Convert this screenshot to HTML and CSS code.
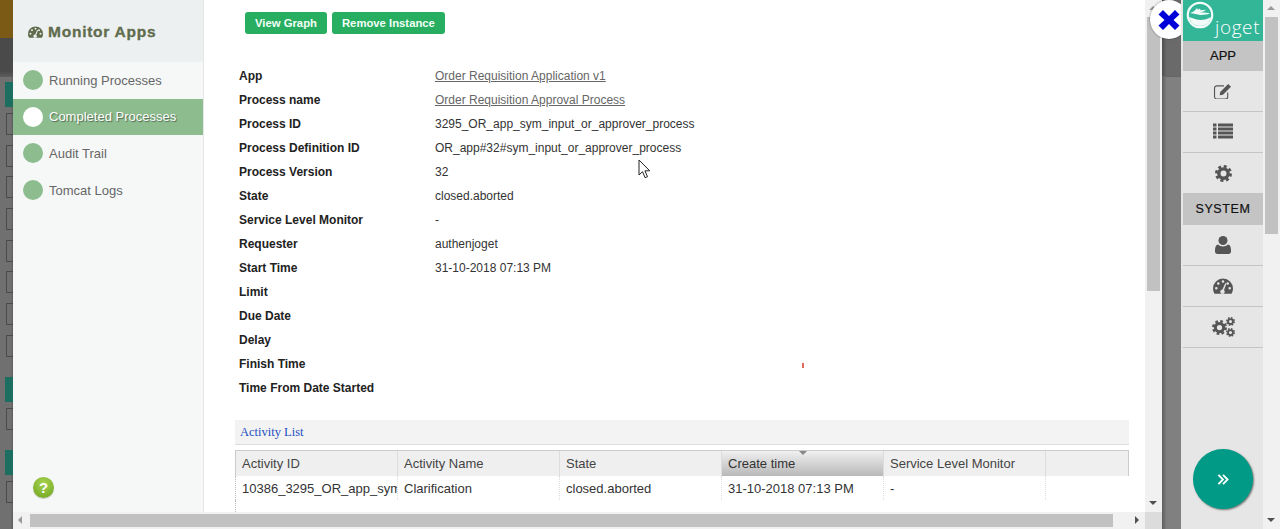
FILE: index.html
```html
<!DOCTYPE html>
<html lang="en">
<head>
    <meta charset="UTF-8">
    <title>Monitor Apps</title>
    <link rel="stylesheet" href="styles.css">
</head>
<body>
    <svg class="defs" width="0" height="0">
        <symbol id="i-gauge" viewBox="0 0 20 16">
            <path fill-rule="evenodd" d="M10 0.5a10 10 0 0 1 10 10c0 1.8-.5 3.4-1.3 4.9-.2.3-.5.4-.8.4H2.100c-.3 0-.6-.1-.8-.4A10 10 0 0 1 0 10.500a10 10 0 0 1 10-10zM10 2.200a1.300 1.300 0 1 0 0 2.600 1.300 1.300 0 0 0 0-2.600zM5.300 4.200a1.300 1.300 0 1 0 0 2.600 1.300 1.300 0 0 0 0-2.600zM3.300 9a1.300 1.300 0 1 0 0 2.600 1.300 1.300 0 0 0 0-2.600zM16.700 9a1.300 1.300 0 1 0 0 2.600 1.300 1.300 0 0 0 0-2.600zM14.700 4.200a1.300 1.300 0 1 0 0 2.600 1.300 1.300 0 0 0 0-2.600zM12.200 5.200l-2.700 6.300a2.200 2.200 0 1 0 1.500.6l2.400-6.400z"/>
        </symbol>
        <symbol id="i-gear" viewBox="0 0 20 20">
            <circle cx="10" cy="10" r="5.500" fill="none" stroke="currentColor" stroke-width="4"/>
            <circle cx="10" cy="10" r="8.300" fill="none" stroke="currentColor" stroke-width="3.400" stroke-dasharray="3.500 3.020"/>
        </symbol>
    </svg>

    <div class="screen">
        <div class="strip">
            <div class="strip-brown"></div>
            <div class="strip-dark"></div>
            <div class="teal first"></div>
            <div class="box"></div>
            <div class="box"></div>
            <div class="box"></div>
            <div class="box"></div>
            <div class="box"></div>
            <div class="box"></div>
            <div class="box"></div>
            <div class="box"></div>
            <div class="teal later"></div>
            <div class="box"></div>
            <div class="teal later"></div>
            <div class="box"></div>
        </div>

        <div class="modal">
            <div class="modal-body">
                <aside class="sidebar">
                    <h2 class="side-title">
                        <svg class="title-icon"><use href="#i-gauge"/></svg>
                        Monitor Apps
                    </h2>
                    <ul class="side-menu">
                        <li><span class="dot"></span>Running Processes</li>
                        <li class="active"><span class="dot"></span>Completed Processes</li>
                        <li><span class="dot"></span>Audit Trail</li>
                        <li><span class="dot"></span>Tomcat Logs</li>
                    </ul>
                    <div class="help">?</div>
                </aside>

                <main class="content">
                    <div class="actions">
                        <button>View Graph</button>
                        <button>Remove Instance</button>
                    </div>

                    <table class="details">
                        <tr><th>App</th><td><a href="#">Order Requisition Application v1</a></td></tr>
                        <tr><th>Process name</th><td><a href="#">Order Requisition Approval Process</a></td></tr>
                        <tr><th>Process ID</th><td>3295_OR_app_sym_input_or_approver_process</td></tr>
                        <tr><th>Process Definition ID</th><td>OR_app#32#sym_input_or_approver_process</td></tr>
                        <tr><th>Process Version</th><td>32</td></tr>
                        <tr><th>State</th><td>closed.aborted</td></tr>
                        <tr><th>Service Level Monitor</th><td>-</td></tr>
                        <tr><th>Requester</th><td>authenjoget</td></tr>
                        <tr><th>Start Time</th><td>31-10-2018 07:13 PM</td></tr>
                        <tr><th>Limit</th><td></td></tr>
                        <tr><th>Due Date</th><td></td></tr>
                        <tr><th>Delay</th><td></td></tr>
                        <tr><th>Finish Time</th><td></td></tr>
                        <tr><th>Time From Date Started</th><td></td></tr>
                    </table>

                    <div class="list-title">Activity List</div>

                    <table class="activities">
                        <thead>
                            <tr>
                                <th>Activity ID</th>
                                <th>Activity Name</th>
                                <th>State</th>
                                <th class="sorted">Create time</th>
                                <th>Service Level Monitor</th>
                                <th class="filler"></th>
                            </tr>
                        </thead>
                        <tbody>
                            <tr>
                                <td>10386_3295_OR_app_sym</td>
                                <td>Clarification</td>
                                <td>closed.aborted</td>
                                <td>31-10-2018 07:13 PM</td>
                                <td>-</td>
                                <td class="filler"></td>
                            </tr>
                        </tbody>
                    </table>
                    <div class="table-rest"></div>

                    <span class="red-tick"></span>
                    <svg class="cursor" width="14" height="20" viewBox="0 0 14 20">
                        <path d="M1 1v15l3.500-3.300 2.600 6 2.400-1-2.600-5.900h4.800z" fill="#fff" stroke="#222" stroke-width="1"/>
                    </svg>
                </main>

                <div class="vscroll">
                    <span class="arrow up"></span>
                    <div class="thumb"></div>
                    <span class="arrow down"></span>
                </div>
            </div>

            <div class="hscroll">
                <span class="arrow left"></span>
                <div class="hthumb"></div>
                <span class="arrow right"></span>
                <div class="corner"></div>
            </div>
        </div>

        <div class="gutter">
            <div class="gutter-top"></div>
        </div>

        <nav class="panel">
            <div class="logo">
                <svg class="logo-mark" width="28" height="28" viewBox="0 0 28 28">
                    <circle cx="14" cy="14" r="12.200" fill="none" stroke="#f2fbf8" stroke-width="2.200"/>
                    <path d="M4 12c3-.5 5-2.500 7-5l1 1.800 2-1.300.6 1.700 5.400-.4c-1.500 1.300-3.500 2.200-6 2.700 3.500-.2 7 0 10 1-3.500 1.200-7 1.600-10 1.400-3-.2-6-1.400-10-1.900z" fill="#f2fbf8"/>
                    <path d="M3 16c4 1 8 3 12 3 3 0 7-1 10-3-1 5-5 9-11 9-5.500 0-10-4-11-9z" fill="#f2fbf8"/>
                </svg>
                <span class="logo-text">joget</span>
            </div>
            <div class="panel-head">APP</div>
            <div class="panel-item">
                <svg width="20" height="16" viewBox="0 0 20 17" fill="none" stroke="#555">
                    <path d="M15 10v4.500a2.500 2.500 0 0 1-2.500 2.500h-9A2.500 2.500 0 0 1 1 14.500v-9A2.500 2.500 0 0 1 3.500 3H11" stroke-width="1.200"/>
                    <path d="M7 9.500L15.500 1l3 3-8.500 8.500-3.500.6z" fill="#555" stroke="none"/>
                </svg>
            </div>
            <div class="panel-item">
                <svg class="list-icon" width="20" height="16" viewBox="0 0 20 15" fill="#555">
                    <path d="M0 0h3.500v3H0zM5 0h15v3H5zM0 4h3.500v3H0zM5 4h15v3H5zM0 8h3.500v3H0zM5 8h15v3H5zM0 12h3.500v3H0zM5 12h15v3H5z"/>
                </svg>
            </div>
            <div class="panel-item no-line">
                <svg class="gear" width="17" height="17"><use href="#i-gear"/></svg>
            </div>
            <div class="panel-head system">SYSTEM</div>
            <div class="panel-item">
                <svg width="16" height="18" viewBox="0 0 16 18" fill="#555">
                    <circle cx="8" cy="4.500" r="4.500"/>
                    <path d="M3 8.500c1.300 1.300 3 2 5 2s3.700-.7 5-2c2 .3 3 2.500 3 5.500v1.500c0 1.400-1 2.500-2.500 2.500h-11C1 18 0 16.900 0 15.500V14c0-3 1-5.200 3-5.500z"/>
                </svg>
            </div>
            <div class="panel-item">
                <svg class="gauge" width="20" height="16"><use href="#i-gauge"/></svg>
            </div>
            <div class="panel-item">
                <span class="cogs">
                    <svg class="gear cog-big" width="15" height="15"><use href="#i-gear"/></svg>
                    <span class="cog-small">
                        <svg class="gear" width="9" height="9"><use href="#i-gear"/></svg>
                        <svg class="gear" width="9" height="9"><use href="#i-gear"/></svg>
                    </span>
                </span>
            </div>
            <div class="expand">
                <svg width="12" height="11" viewBox="0 0 13 12" fill="none" stroke="#fff" stroke-width="2">
                    <path d="M1.500 1l5 5-5 5M6.500 1l5 5-5 5"/>
                </svg>
            </div>
        </nav>

        <div class="page-scroll">
            <span class="arrow up"></span>
            <div class="thumb"></div>
            <span class="arrow down"></span>
        </div>

        <div class="close-btn">
            <svg width="24" height="24" viewBox="0 0 24 24">
                <path d="M6 2l6 6 6-6 4.500 4.500-6 5.500 6 5.500L18 22l-6-6-6 6-4.500-4.500 6-5.500-6-5.500z" fill="#0000d8"/>
            </svg>
        </div>
    </div>
</body>
</html>
```

FILE: styles.css
```css
* {
    box-sizing: border-box;
}
html, body {
    margin: 0;
    height: 529px;
    overflow: hidden;
}
body {
    font-family: "Liberation Sans", Arial, sans-serif;
    font-size: 12px;
    color: #333;
    background: #fff;
}
.defs {
    position: absolute;
}
.screen {
    position: relative;
    display: flex;
    width: 1280px;
    height: 529px;
}

/* dimmed page behind the dialog */
.strip {
    width: 13px;
    flex: none;
    background: linear-gradient(to right, #707070 85%, #5c5c5c);
    overflow: hidden;
}
.strip-brown {
    height: 38px;
    background: #7a5a14;
}
.strip-dark {
    height: 39px;
    background: linear-gradient(to bottom, #4a4a4a 85%, #5c5c5c);
}
.teal {
    width: 8px;
    height: 25px;
    margin-left: 5px;
    background: #1c6f60;
}
.teal.first {
    margin-top: 5px;
}
.teal.later {
    margin-top: 20px;
}
.box {
    width: 8px;
    height: 22px;
    margin: 9.700px 0 0 6px;
    border: 1px solid #4b4b4b;
    border-right: none;
}
.teal + .box {
    margin-top: 6px;
}

.modal {
    width: 1149px;
    flex: none;
    display: flex;
    flex-direction: column;
    background: #fff;
}
.modal-body {
    display: flex;
    height: 512px;
}

.sidebar {
    width: 191px;
    flex: none;
    display: flex;
    flex-direction: column;
    background: #f6f8f8;
    border-right: 1px solid #e6e6e6;
}
.side-title {
    height: 62px;
    margin: 0;
    padding: 23px 0 0 15px;
    font-size: 15.500px;
    font-weight: bold;
    letter-spacing: 0.75px;
    color: #5f6b4c;
    background: #ecf0f1;
    -webkit-text-stroke: 0.3px #5f6b4c;
}
.title-icon {
    width: 15px;
    height: 12px;
    fill: #5f6b4c;
    vertical-align: -1px;
}
.side-menu {
    list-style: none;
    margin: 0;
    padding: 0;
}
.side-menu li {
    display: flex;
    align-items: center;
    gap: 6px;
    height: 37px;
    padding: 0 0 1px 10px;
    font-size: 13px;
    color: #666;
}
.side-menu li.active {
    height: 36px;
    color: #fff;
    background: #8dbd8f;
    text-shadow: 1px 1px 1px rgba(0,0,0,0.45);
}
.dot {
    width: 20px;
    height: 20px;
    border-radius: 50%;
    background: #8dbd8f;
}
.active .dot {
    background: #fff;
}
.help {
    width: 21px;
    height: 21px;
    margin: auto 0 14px 20px;
    border-radius: 50%;
    font-size: 15px;
    font-weight: bold;
    line-height: 21px;
    text-align: center;
    color: #fff;
    background: radial-gradient(circle at 50% 30%, #a6d24e, #6ea31f);
    box-shadow: 0 1px 1px rgba(0,0,0,0.2);
}

.content {
    position: relative;
    width: 941px;
    flex: none;
    padding-left: 31px;
    overflow: hidden;
    background: #fff;
}
.actions {
    display: flex;
    gap: 5px;
    padding: 12px 0 0 10px;
}
.actions button {
    height: 22px;
    padding: 0 10px;
    border: none;
    border-radius: 3px;
    font-family: inherit;
    font-size: 11.300px;
    font-weight: bold;
    color: #f2fff7;
    background: #27ae60;
}
.details {
    margin: 30px 0 0 0;
    border-collapse: collapse;
    table-layout: fixed;
    width: 894px;
}
.details th, .details td {
    height: 24px;
    padding: 0 0 0 4px;
    font-size: 12px;
    text-align: left;
    color: #333;
}
.details th {
    width: 196px;
    color: #222;
}
.details a {
    color: #666;
}
.list-title {
    width: 894px;
    height: 25px;
    margin-top: 20px;
    padding: 5px;
    font-family: "Liberation Serif", "Times New Roman", serif;
    font-size: 12.500px;
    color: #1e50c0;
    background: #f3f3f3;
    border-bottom: 1px solid #ddd;
}
.activities {
    width: 894px;
    margin-top: 5px;
    border-collapse: separate;
    border-spacing: 0;
    table-layout: fixed;
    border-top: 1px solid #ccc;
}
.activities th {
    width: 162px;
    height: 25px;
    padding: 0 6px;
    font-weight: normal;
    font-size: 13px;
    text-align: left;
    color: #444;
    background: #efefef;
    border-right: 1px solid #ddd;
}
.activities th:first-child {
    width: 163px;
    border-left: 1px solid #ccc;
}
.activities th.sorted {
    position: relative;
    background: linear-gradient(to bottom, #f0f0f0, #b8b8b8);
    color: #333;
}
.activities th.sorted::before {
    content: "";
    position: absolute;
    left: 77px;
    top: 0;
    border: 4px solid transparent;
    border-bottom: none;
    border-top: 4px solid #888;
}
.activities th.filler {
    width: auto;
    border-right: 1px solid #ccc;
}
.activities td {
    height: 24px;
    padding: 0 6px;
    font-size: 13px;
    color: #333;
    white-space: nowrap;
    overflow: hidden;
    border-right: 1px dotted #ddd;
}
.activities td:first-child {
    border-left: 1px dotted #bbb;
}
.activities td.filler {
    border-right: none;
}
.table-rest {
    height: 20px;
    border-left: 1px dotted #bbb;
}
.red-tick {
    position: absolute;
    left: 598px;
    top: 363px;
    width: 2px;
    height: 5px;
    background: #e2685a;
}
.cursor {
    position: absolute;
    left: 434px;
    top: 159px;
}

.vscroll, .page-scroll {
    position: relative;
    width: 17px;
    flex: none;
    background: #f1f1f1;
}
.vscroll .thumb {
    position: absolute;
    left: 2px;
    top: 17px;
    width: 13px;
    height: 274px;
    background: #c1c1c1;
}
.page-scroll .thumb {
    position: absolute;
    left: 2px;
    top: 17px;
    width: 13px;
    height: 217px;
    background: #c1c1c1;
}
.arrow {
    position: absolute;
    width: 0;
    height: 0;
    border: 4px solid transparent;
}
.arrow.up {
    top: 6px;
    left: 4px;
    border-top: none;
    border-bottom: 4px solid #999;
}
.arrow.down {
    left: 4px;
    bottom: 7px;
    border-bottom: none;
    border-top: 4px solid #505050;
}
.arrow.left {
    left: 5px;
    top: 4px;
    border-left: none;
    border-right: 4px solid #999;
}
.arrow.right {
    left: 1122px;
    top: 4px;
    border-right: none;
    border-left: 4px solid #505050;
}
.hscroll {
    position: relative;
    display: flex;
    height: 17px;
    background: #f1f1f1;
}
.hthumb {
    width: 1083px;
    height: 13px;
    margin: 2px 0 0 17px;
    background: #c1c1c1;
}
.corner {
    position: absolute;
    right: 0;
    top: 0;
    width: 17px;
    height: 17px;
    background: #dcdcdc;
}

.gutter {
    width: 19px;
    flex: none;
    background: linear-gradient(to right, #5e5e5e, #808080 25%);
}
.gutter-top {
    height: 77px;
    background: linear-gradient(to right, #4e4e4e, #6a6a6a 25%);
    border-bottom: 1px solid #666;
}

.panel {
    position: relative;
    z-index: 2;
    width: 82px;
    flex: none;
    display: flex;
    flex-direction: column;
    padding-left: 2px;
    background: #e6e6e6;
}
.logo {
    position: relative;
    height: 41px;
    background: #33b598;
}
.logo-mark {
    position: absolute;
    left: 3px;
    top: 1px;
}
.logo-text {
    position: absolute;
    left: 32px;
    top: 14px;
    font-family: "Open Sans", sans-serif;
    font-size: 19px;
    font-weight: 300;
    color: #fff;
    letter-spacing: 0.6px;
}
.panel-head {
    height: 30px;
    font-size: 13px;
    line-height: 30px;
    text-align: center;
    color: #111;
    background: #c4c4c4;
    -webkit-text-stroke: 0.2px #111;
}
.panel-head.system {
    height: 32px;
    font-size: 12.500px;
    line-height: 32px;
    letter-spacing: 0.6px;
}
.panel-item {
    display: flex;
    align-items: center;
    justify-content: center;
    height: 41px;
    border-bottom: 1px solid #c4c4c4;
    color: #555;
}
.panel-item.no-line {
    height: 40px;
    border-bottom: none;
}
.list-icon {
    margin-bottom: 2px;
}
.gear {
    color: #555;
    fill: #555;
}
.gauge {
    fill: #555;
}
.cogs {
    display: flex;
    align-items: center;
}
.cog-small {
    display: flex;
    flex-direction: column;
    gap: 2px;
}
.cog-big {
    margin-right: -1px;
}
.expand {
    position: absolute;
    left: 12px;
    top: 449px;
    width: 60px;
    height: 60px;
    display: flex;
    align-items: center;
    justify-content: center;
    border-radius: 50%;
    background: #009a87;
    box-shadow: 1px 1px 2px rgba(0,0,0,0.5);
}

.close-btn {
    position: absolute;
    left: 1150px;
    top: 0;
    width: 38px;
    height: 39px;
    display: flex;
    align-items: center;
    justify-content: center;
    border-radius: 50%;
    background: #fff;
    box-shadow: 0 0 2px rgba(0,0,0,0.5);
}
```
